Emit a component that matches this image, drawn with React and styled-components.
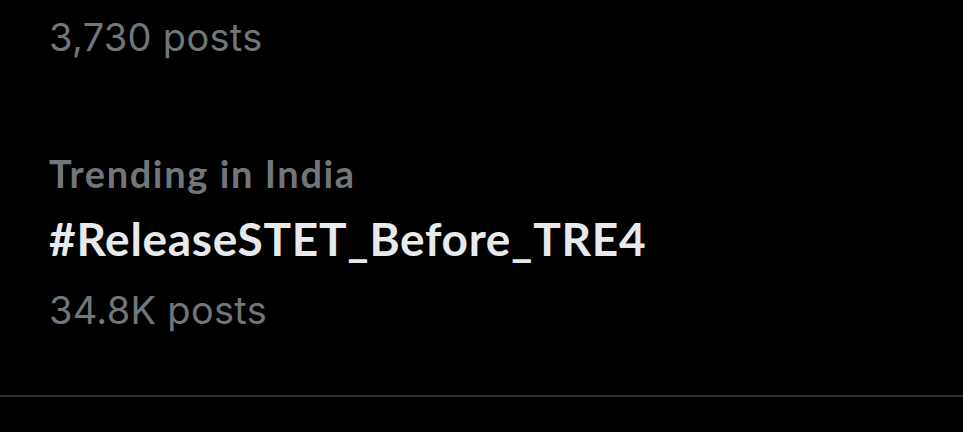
import React from "react";
import styled, { createGlobalStyle } from "styled-components";

const Global = createGlobalStyle`
  html, body { margin: 0; padding: 0; background: #000; }
  body { width: 963px; height: 432px; overflow: hidden; }
`;

const Page = styled.div`
  width: 963px;
  height: 432px;
  background: #000;
  display: flex;
  flex-direction: column;
`;

const Item = styled.div`
  display: flex;
  flex-direction: column;
  padding: ${(p) => p.$pad || "0 0 0 49px"};
`;

const Meta = styled.div`
  font-family: Inter, "Noto Sans", sans-serif;
  font-size: 38px;
  line-height: 48px;
  letter-spacing: 0.3px;
  color: #71767b;
  margin-top: ${(p) => p.$mt || "0px"};
`;

const Context = styled.div`
  font-family: Lato, "Noto Sans", sans-serif;
  font-weight: 700;
  font-size: 38px;
  line-height: 48px;
  letter-spacing: 1.6px;
  color: #71767b;
`;

const Topic = styled.div`
  font-family: Lato, "Noto Sans", sans-serif;
  font-weight: 700;
  font-size: 46px;
  line-height: 66px;
  letter-spacing: 0.7px;
  margin-top: 9px;
  color: #e7e9ea;
`;

const Divider = styled.div`
  height: 2px;
  background: #2f3336;
  margin-top: auto;
  margin-bottom: 35px;
`;

export default function App() {
  return (
    <>
      <Global />
      <Page>
        <Item $pad="13px 0 0 49px">
          <Meta>3,730 posts</Meta>
        </Item>
        <Item $pad="88px 0 0 49px">
          <Context>Trending in India</Context>
          <Topic>#ReleaseSTET_Before_TRE4</Topic>
          <Meta $mt="14px">34.8K posts</Meta>
        </Item>
        <Divider />
      </Page>
    </>
  );
}
